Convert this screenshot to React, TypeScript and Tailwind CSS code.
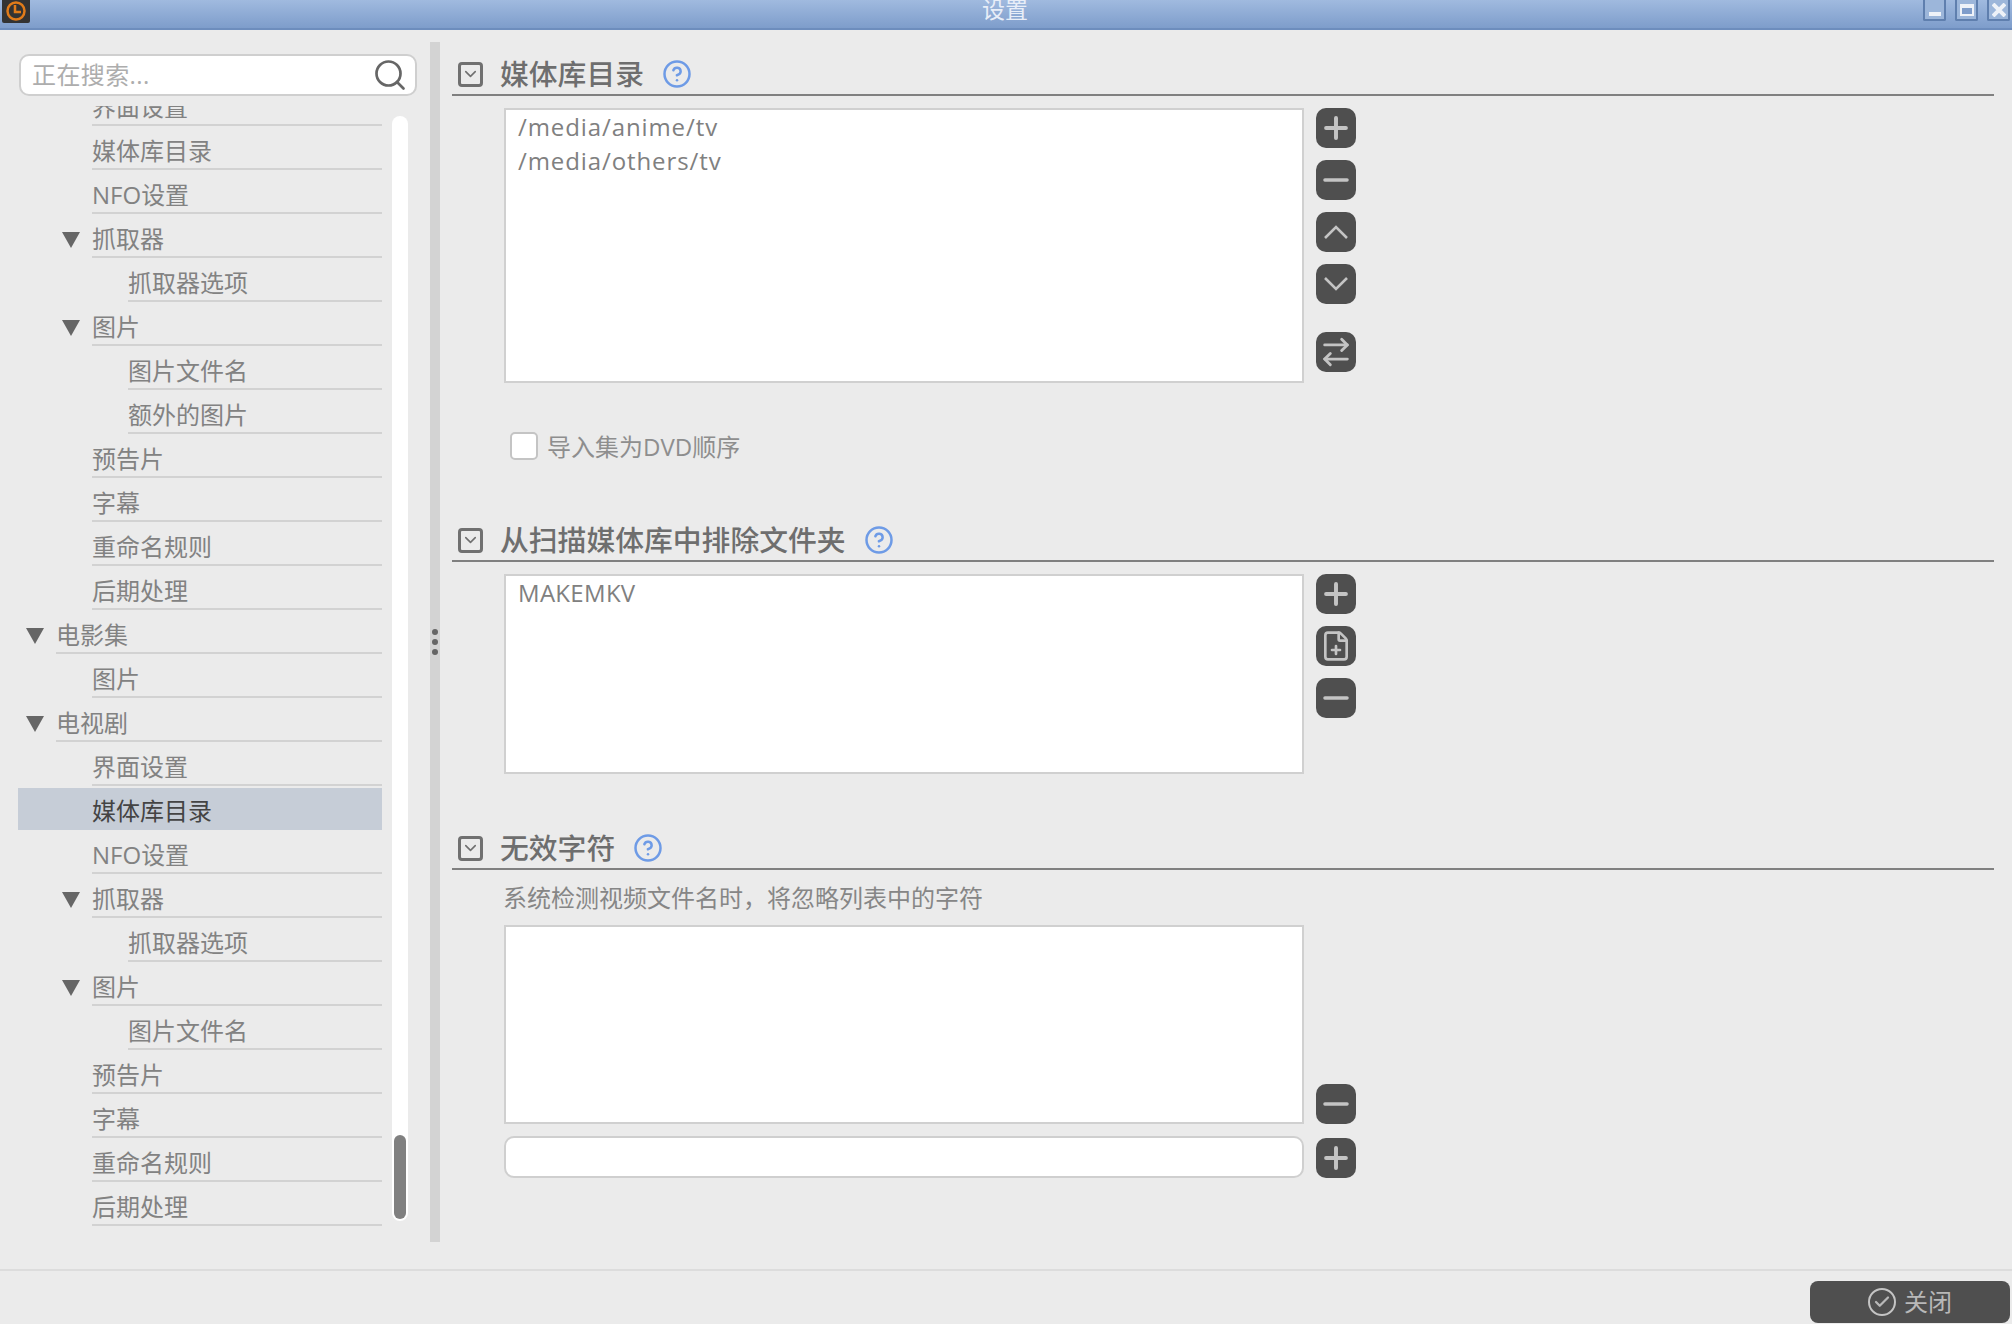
import { ArrowRightLeft, Check, ChevronDown, CircleHelp, FilePlus, Minus, Plus, Search } from 'lucide-react'
import type { ReactNode } from 'react'

type Row = { label: string; level: 0 | 1 | 2; arrow?: boolean; selected?: boolean }

const rows: Row[] = [
  { label: '界面设置', level: 1 },
  { label: '媒体库目录', level: 1 },
  { label: 'NFO设置', level: 1 },
  { label: '抓取器', level: 1, arrow: true },
  { label: '抓取器选项', level: 2 },
  { label: '图片', level: 1, arrow: true },
  { label: '图片文件名', level: 2 },
  { label: '额外的图片', level: 2 },
  { label: '预告片', level: 1 },
  { label: '字幕', level: 1 },
  { label: '重命名规则', level: 1 },
  { label: '后期处理', level: 1 },
  { label: '电影集', level: 0, arrow: true },
  { label: '图片', level: 1 },
  { label: '电视剧', level: 0, arrow: true },
  { label: '界面设置', level: 1 },
  { label: '媒体库目录', level: 1, selected: true },
  { label: 'NFO设置', level: 1 },
  { label: '抓取器', level: 1, arrow: true },
  { label: '抓取器选项', level: 2 },
  { label: '图片', level: 1, arrow: true },
  { label: '图片文件名', level: 2 },
  { label: '预告片', level: 1 },
  { label: '字幕', level: 1 },
  { label: '重命名规则', level: 1 },
  { label: '后期处理', level: 1 },
]

const indent = { 0: 'w-[38px]', 1: 'w-[74px]', 2: 'w-[110px]' }

function TreeRow({ row }: { row: Row }) {
  return (
    <div className={`flex h-[44px] shrink-0 ${row.selected ? 'bg-[#c6cdd7] bg-clip-content pt-[2px]' : ''}`}>
      <div className={`flex shrink-0 items-center justify-end pt-[8px] pr-[12px] ${indent[row.level]}`}>
        {row.arrow && (
          <svg width="18" height="16" viewBox="0 0 18 16">
            <polygon points="0,0 18,0 9,16" fill="#666" />
          </svg>
        )}
      </div>
      <div
        className={`flex flex-1 items-center text-[24px] ${
          row.selected ? 'pt-[4px] text-[#444]' : 'border-b-2 border-[#d2d2d2] pt-[8px] text-[#828282]'
        }`}
      >
        {row.label}
      </div>
    </div>
  )
}

function ToolButton({ children, className = '' }: { children: ReactNode; className?: string }) {
  return (
    <div className={`flex h-[40px] w-[40px] items-center justify-center rounded-[10px] bg-[#4f4f4f] text-[#c4c4c4] ${className}`}>
      {children}
    </div>
  )
}

function PlusButton() {
  return (
    <ToolButton>
      <Plus size={34} strokeWidth={2.8} />
    </ToolButton>
  )
}

function MinusButton() {
  return (
    <ToolButton>
      <Minus size={38} strokeWidth={2.1} />
    </ToolButton>
  )
}

function SectionHeader({ title }: { title: string }) {
  return (
    <div className="flex h-[44px] items-center border-b-2 border-[#808080] pt-[2px]">
      <div className="ml-[6px] flex h-[25px] w-[25px] items-center justify-center rounded-[4px] border-[3px] border-[#707070]">
        <ChevronDown size={20} strokeWidth={2} className="text-[#707070]" />
      </div>
      <span className="ml-[17px] text-[28.8px] font-medium text-[#6e6e6e]">{title}</span>
      <CircleHelp size={30} strokeWidth={2} className="ml-[18px] text-[#6e9be6]" />
    </div>
  )
}

function ListBox({ lines = [], className }: { lines?: string[]; className: string }) {
  return (
    <div className={`w-[800px] border-2 border-[#d0d0d0] bg-white px-[12px] text-[24px] leading-[34px] text-[#808080] ${className}`}>
      {lines.map((line) => (
        <div key={line}>{line}</div>
      ))}
    </div>
  )
}

export default function App() {
  return (
    <div className="flex h-[1324px] w-[2012px] flex-col overflow-hidden bg-[#ebebeb] font-['Open_Sans','Noto_Sans_CJK_SC',sans-serif]">
      {/* title bar */}
      <div className="flex h-[30px] shrink-0 items-start border-b-2 border-[#6d8dbd] bg-gradient-to-b from-[#a0badf] to-[#7e9dcb]">
        <div className="flex flex-1">
          <div className="ml-[2px] flex h-[23px] w-[28px] items-end justify-center rounded-b-[2px] bg-[#333]">
            <svg width="22" height="22" viewBox="0 0 22 22" fill="none" stroke="#e07b1a" strokeWidth="2.5">
              <circle cx="11" cy="10" r="8.5" />
              <path d="M10 4v7h6" />
            </svg>
          </div>
        </div>
        <span className="-mt-[6px] text-[23px] leading-[30px] text-[#e8eef8]">设置</span>
        <div className="flex flex-1 justify-end gap-[9px] pr-[2px]">
          <div className="flex h-[21px] w-[23px] items-end justify-center rounded-b-[2px] border-2 border-t-0 border-[#5f7fae] bg-[#9cb6da] pb-[3px]">
            <div className="h-[4px] w-[12px] bg-[#eef2f8]" />
          </div>
          <div className="flex h-[21px] w-[23px] items-center justify-center rounded-b-[2px] border-2 border-t-0 border-[#5f7fae] bg-[#9cb6da]">
            <div className="h-[12px] w-[14px] border-2 border-t-4 border-[#eef2f8] bg-[#7f9dcb]" />
          </div>
          <div className="flex h-[21px] w-[23px] items-center justify-center rounded-b-[2px] border-2 border-t-0 border-[#5f7fae] bg-[#9cb6da] text-[#eef2f8]">
            <svg width="14" height="14" viewBox="0 0 14 14" stroke="currentColor" strokeWidth="4">
              <path d="M1 1l12 12M13 1L1 13" />
            </svg>
          </div>
        </div>
      </div>

      <div className="flex min-h-0 flex-1">
        {/* left tree */}
        <div className="flex w-[430px] shrink-0 flex-col pt-[24px]">
          <div className="ml-[19px] flex h-[42px] w-[398px] items-center justify-between rounded-[10px] border-2 border-[#cfcfcf] bg-white pr-[7px] pl-[11px]">
            <span className="text-[24px] tracking-[0.4px] text-[#adadad]">正在搜索...</span>
            <Search size={36} strokeWidth={1.8} className="text-[#666]" />
          </div>
          <div className="mt-[10px] flex min-h-0 flex-1">
            <div className="ml-[18px] h-[1124px] w-[364px] overflow-hidden">
              <div className="-mt-[24px] flex flex-col">
                {rows.map((row, i) => (
                  <TreeRow key={i} row={row} />
                ))}
              </div>
            </div>
            <div className="mt-[10px] ml-[10px] flex h-[1105px] w-[16px] flex-col justify-end rounded-full bg-white p-[2px]">
              <div className="h-[84px] rounded-full bg-[#808080]" />
            </div>
          </div>
        </div>

        {/* splitter */}
        <div className="mt-[12px] flex h-[1200px] w-[10px] shrink-0 flex-col items-center justify-center gap-[4px] bg-[#d3d3d3]">
          <div className="h-[6px] w-[6px] rounded-full bg-[#666]" />
          <div className="h-[6px] w-[6px] rounded-full bg-[#666]" />
          <div className="h-[6px] w-[6px] rounded-full bg-[#666]" />
        </div>

        {/* settings panel */}
        <div className="flex-1 pt-[22px] pr-[18px] pl-[12px]">
          <SectionHeader title="媒体库目录" />
          <div className="mt-[12px] ml-[52px] flex gap-[12px]">
            <ListBox lines={['/media/anime/tv', '/media/others/tv']} className="h-[275px] tracking-[0.9px]" />
            <div className="flex flex-col gap-[12px]">
              <PlusButton />
              <MinusButton />
              <ToolButton>
                <svg width="28" height="18" viewBox="0 0 28 18" fill="none" stroke="currentColor" strokeWidth="2.6">
                  <path d="M3 15L14 4l11 11" />
                </svg>
              </ToolButton>
              <ToolButton>
                <svg width="28" height="18" viewBox="0 0 28 18" fill="none" stroke="currentColor" strokeWidth="2.6">
                  <path d="M3 3l11 11L25 3" />
                </svg>
              </ToolButton>
              <ToolButton className="mt-[16px]">
                <ArrowRightLeft size={34} strokeWidth={2} />
              </ToolButton>
            </div>
          </div>
          <div className="mt-[49px] ml-[58px] flex items-center gap-[9px]">
            <div className="h-[28px] w-[28px] rounded-[5px] border-2 border-[#c4c4c4] bg-white" />
            <span className="pt-[2px] text-[24px] leading-[26px] text-[#8e8e8e]">导入集为DVD顺序</span>
          </div>

          <div className="mt-[58px]">
            <SectionHeader title="从扫描媒体库中排除文件夹" />
          </div>
          <div className="mt-[12px] ml-[52px] flex gap-[12px]">
            <ListBox lines={['MAKEMKV']} className="h-[200px] tracking-[0.3px]" />
            <div className="flex flex-col gap-[12px]">
              <PlusButton />
              <ToolButton>
                <FilePlus size={32} strokeWidth={2} />
              </ToolButton>
              <MinusButton />
            </div>
          </div>

          <div className="mt-[52px]">
            <SectionHeader title="无效字符" />
          </div>
          <div className="mt-[12px] ml-[51px] text-[24px] leading-[32px] text-[#868686]">系统检测视频文件名时，将忽略列表中的字符</div>
          <div className="mt-[11px] ml-[52px] flex items-end gap-[12px]">
            <ListBox className="h-[199px]" />
            <MinusButton />
          </div>
          <div className="mt-[12px] ml-[52px] flex items-end gap-[12px]">
            <div className="h-[42px] w-[800px] rounded-[10px] border-2 border-[#cfcfcf] bg-white" />
            <PlusButton />
          </div>
        </div>
      </div>

      {/* footer */}
      <div className="flex h-[55px] shrink-0 justify-end border-t-2 border-[#dcdcdc] pt-[10px] pr-[2px]">
        <div className="flex h-[42px] w-[200px] items-center justify-center gap-[8px] rounded-[8px] bg-[#4f4f4f] text-[#b8b8b8]">
          <div className="flex h-[28px] w-[28px] items-center justify-center rounded-full border-2 border-[#c4c4c4]">
            <Check size={18} strokeWidth={3} />
          </div>
          <span className="text-[24px]">关闭</span>
        </div>
      </div>
    </div>
  )
}
